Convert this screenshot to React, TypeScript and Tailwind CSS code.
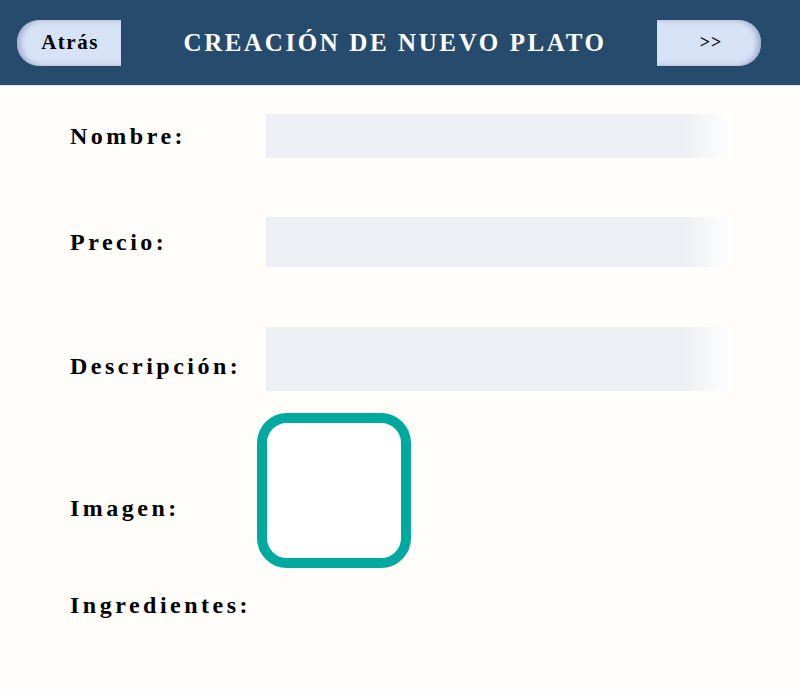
export default function App() {
  const serif = { fontFamily: '"Liberation Serif", "DejaVu Serif", serif' }
  const label = 'shrink-0 text-[24px] font-bold tracking-[3.5px] text-black'
  const field = 'w-[465px] bg-gradient-to-r from-[#eceff3] from-[90%] to-[#ffffff]'

  return (
    <div className="min-h-[690px] w-[800px] bg-[#fffdf9]" style={serif}>
      <header className="flex h-[86px] items-center justify-between border-b border-[#dbe2ea] bg-[#274b6d] pl-[17px] pr-[39px]">
        <button className="h-[46px] w-[104px] rounded-l-[22px] bg-[#d6e2f6] pl-[2px] text-[21px] font-bold tracking-[1.5px] text-black shadow-[inset_4px_0_5px_rgba(80,90,130,0.35)]">
          Atrás
        </button>
        <h1 className="ml-[12px] text-[25px] font-bold tracking-[2.6px] text-white">CREACIÓN DE NUEVO PLATO</h1>
        <button className="h-[46px] w-[104px] rounded-r-[22px] bg-[#d6e2f6] pl-[4px] text-[18px] font-bold tracking-[1px] text-black shadow-[inset_-4px_0_5px_rgba(80,90,130,0.35)]">
          &gt;&gt;
        </button>
      </header>

      <main className="flex flex-col pl-[70px]">
        <div className="mt-[28px] flex items-center">
          <span className={`${label} w-[196px]`}>Nombre:</span>
          <div className={`${field} h-[44px]`} />
        </div>

        <div className="mt-[59px] flex items-center">
          <span className={`${label} w-[196px]`}>Precio:</span>
          <div className={`${field} h-[50px]`} />
        </div>

        <div className="mt-[60px] flex items-center">
          <span className={`${label} w-[196px] pt-[14px]`}>Descripción:</span>
          <div className={`${field} h-[64px]`} />
        </div>

        <div className="mt-[22px] flex items-center">
          <span className={`${label} w-[187px] pt-[34px]`}>Imagen:</span>
          <div className="h-[155px] w-[154px] rounded-[30px] border-[10px] border-[#00a99d] bg-white" />
        </div>

        <div className="mt-[19px] flex items-center">
          <span className={label}>Ingredientes:</span>
        </div>
      </main>
    </div>
  )
}
